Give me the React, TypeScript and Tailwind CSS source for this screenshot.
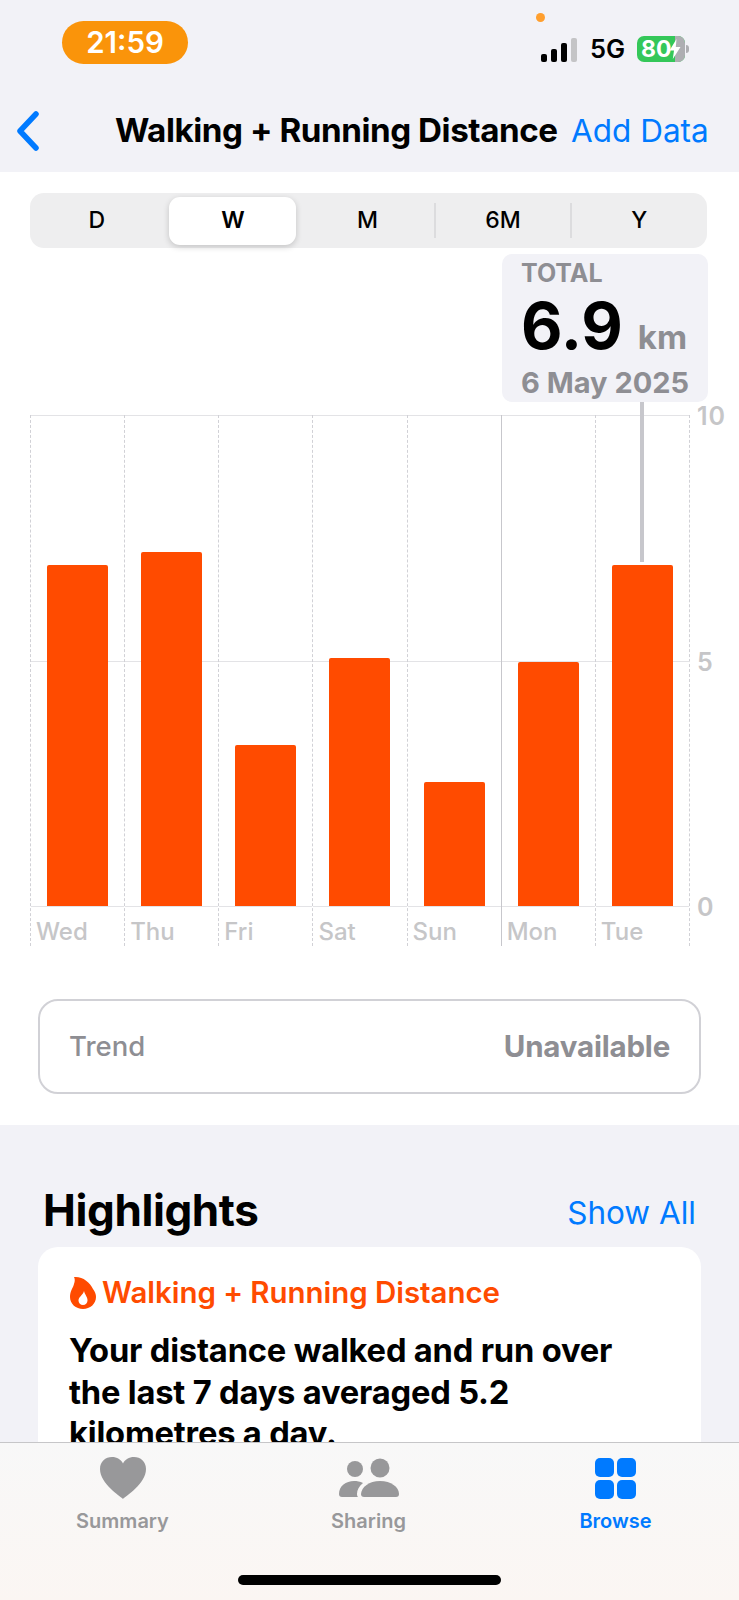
export default function App() {
  const days = [
    { d: "Wed", h: "h-[341px]", solid: false },
    { d: "Thu", h: "h-[354px]", solid: false },
    { d: "Fri", h: "h-[161px]", solid: false },
    { d: "Sat", h: "h-[248px]", solid: false },
    { d: "Sun", h: "h-[124px]", solid: false },
    { d: "Mon", h: "h-[244px]", solid: true },
    { d: "Tue", h: "h-[341px]", solid: false },
  ];
  const font = { fontFamily: "Inter, 'Liberation Sans', sans-serif" };
  return (
    <div style={font} className="relative w-[739px] h-[1600px] overflow-hidden bg-[#f2f2f7] text-black">
      {/* Status + nav */}
      <header className="relative h-[172px] flex flex-col">
        <div className="absolute left-[536px] top-[13px] w-[9px] h-[9px] rounded-full bg-[#ff9f2e]" />
        <div className="flex justify-between items-start h-[92px]">
          <div className="ml-[62px] mt-[21px] w-[126px] h-[43px] rounded-[22px] bg-[#fa940a] flex items-center justify-center text-white text-[29.5px] font-semibold">21:59</div>
          <div className="flex items-center mt-[36px] mr-[50px] h-[26px]">
            <svg width="37" height="24" viewBox="0 0 37 24" className="mt-[1px]">
              <rect x="0" y="16" width="6" height="8" rx="2" fill="#000" />
              <rect x="10" y="11" width="6" height="13" rx="2" fill="#000" />
              <rect x="20" y="5" width="6" height="19" rx="2" fill="#000" />
              <rect x="30" y="0" width="6" height="24" rx="2" fill="#c4c4c6" />
            </svg>
            <span className="ml-[12px] text-[25.5px] font-semibold leading-none w-[47px]">5G</span>
            <div className="relative w-[48px] h-[26px] rounded-[7px] overflow-hidden flex bg-[#34c759]">
              <div className="absolute right-0 top-0 bottom-0 w-[10px] bg-[#aeaeb2]" />
              <span className="relative ml-[4px] text-white text-[23px] font-bold leading-[26px]">80</span>
              <svg width="12" height="20" viewBox="0 0 12 20" className="absolute right-[4px] top-[3px]">
                <path d="M7.5 0 L0.5 11.5 H5 L3.8 20 L11.5 8 H6.8 Z" fill="#fff" />
              </svg>
            </div>
            <div className="w-[3px] h-[8px] ml-[1px] rounded-r-full bg-[#aeaeb2]" />
          </div>
        </div>
        <nav className="flex items-center h-[62px] mt-[8px]">
          <svg width="26" height="40" viewBox="0 0 26 40" className="ml-[15px]">
            <path d="M21 3 L5 20 L21 37" fill="none" stroke="#007aff" strokeWidth="5.5" strokeLinecap="round" strokeLinejoin="round" />
          </svg>
          <div className="ml-[74px] w-[456px] text-[33.2px] font-bold tracking-[-0.45px] whitespace-nowrap">Walking + Running Distance</div>
          <div className="text-[31.5px] text-[#007aff] whitespace-nowrap">Add Data</div>
        </nav>
      </header>

      <main className="bg-white h-[953px] pt-[21px]">
        {/* Segmented control */}
        <div className="relative ml-[30px] w-[677px] h-[55px] rounded-[14px] bg-[#eeeeef] grid grid-cols-5 items-center text-[23px] font-medium text-center">
          <div className="absolute left-[139px] top-[4px] w-[127px] h-[48px] rounded-[11px] bg-white shadow-[0_2px_6px_rgba(0,0,0,0.18)]" />
          <div className="relative pr-[2px]">D</div>
          <div className="relative font-semibold">W</div>
          <div className="relative border-r-2 border-[#dcdcde]">M</div>
          <div className="relative border-r-2 border-[#dcdcde]">6M</div>
          <div className="relative">Y</div>
        </div>

        {/* Chart */}
        <div className="relative mt-[167px] ml-[30px] w-[660px]">
          <div className="absolute left-[472px] -top-[161px] w-[206px] h-[148px] rounded-[10px] bg-[#f2f2f7] z-10 pl-[19px] pt-[6px]">
            <div className="text-[25px] leading-[26px] font-bold text-[#8e8e93]">TOTAL</div>
            <div className="flex items-baseline mt-[5px] h-[70px]">
              <span className="text-[64px] leading-[70px] font-bold">6.9</span>
              <span className="ml-[15px] text-[33px] font-bold text-[#8e8e93]">km</span>
            </div>
            <div className="text-[29px] leading-[36px] font-bold text-[#8e8e93] whitespace-nowrap mt-[4px]">6 May 2025</div>
          </div>
          <div className="absolute left-[610px] -top-[13px] w-[4px] h-[160px] bg-[#c7c7cc] z-10" />

          <div className="absolute left-0 right-0 top-[246px] h-px bg-[#e3e3e6]" />
          <div className="absolute left-[667px] top-[-9px] text-[25px] leading-[20px] font-semibold tracking-[1px] text-[#c6c6c8]">10</div>
          <div className="absolute left-[667px] top-[237px] text-[25px] leading-[20px] font-semibold text-[#c6c6c8]">5</div>
          <div className="absolute left-[667px] top-[482px] text-[25px] leading-[20px] font-semibold text-[#c6c6c8]">0</div>

          <div className="grid grid-cols-7 border-r border-dashed border-[#d1d1d6]">
            {days.map((x) => (
              <div key={x.d} className={x.solid ? "relative border-l border-solid border-[#c7c7cc]" : "relative border-l border-dashed border-[#d1d1d6]"}>
                <div className="h-[492px] flex items-end justify-center border-y border-[#e3e3e6]">
                  <div className={"relative w-[61px] rounded-t-[2px] bg-[#ff4b00] " + x.h} />
                </div>
                <div className="h-[39px] pl-[5px] pt-[11px] text-[24px] leading-[28px] font-medium text-[#c6c6c8]">{x.d}</div>
              </div>
            ))}
          </div>
        </div>

        {/* Trend */}
        <div className="mt-[53px] mx-[38px] h-[95px] rounded-[20px] border-2 border-[#d1d1d6] flex items-center justify-between pl-[29px] pr-[29px] text-[#8e8e93]">
          <span className="font-medium text-[27.5px]">Trend</span>
          <span className="font-bold text-[29.5px] tracking-[-0.2px]">Unavailable</span>
        </div>
      </main>

      {/* Highlights */}
      <section className="px-[38px]">
        <div className="flex justify-between items-center h-[122px] pt-[47px] pl-[5px] pr-[5px]">
          <h2 className="text-[44px] font-bold tracking-[-0.4px]">Highlights</h2>
          <span className="text-[31.5px] text-[#007aff] mt-[6px]">Show All</span>
        </div>
        <div className="rounded-[20px] bg-white h-[300px] px-[31px] pt-[23px]">
          <div className="flex items-center gap-[6px]">
            <svg width="26" height="33" viewBox="0 0 26 33" className="ml-[1px]">
              <path fillRule="evenodd" d="M4 1 C12 0 20 6 23 13 C25 16 26 18 26 21 C26 28 20 33 13 33 C6 33 0 28 0 21 C0 15 3 12 4 8 C5 5 5 3 4 1 Z M14 15 C13 19 8.5 21 8.5 24.5 C8.5 27 10.5 29 13 29 C15.5 29 17.5 27 17.5 24.5 C17.5 21 15 19 14 15 Z" fill="#ff4b00" />
            </svg>
            <span className="text-[29.5px] font-semibold tracking-[-0.05px] text-[#ff4b00] whitespace-nowrap">Walking + Running Distance</span>
          </div>
          <p className="mt-[16px] text-[32.7px] leading-[41.5px] font-bold tracking-[-0.2px]">Your distance walked and run over<br />the last 7 days averaged 5.2<br />kilometres a day.</p>
        </div>
      </section>

      {/* Tab bar */}
      <footer className="absolute left-0 right-0 bottom-0 h-[158px] border-t border-[#c6c6c8] bg-gradient-to-b from-[#f8f8f8] to-[#fbf6f3] grid grid-cols-[245px_247px_247px] text-center text-[20px] font-semibold text-[#98989a]">
        <div className="flex flex-col items-center pt-[14px]">
          <svg width="46" height="42" viewBox="0 0 46 42">
            <path d="M23 42 C20.5 39 0 27 0 12 C0 4.5 5.5 0 12 0 C17 0 21 2.5 23 6.5 C25 2.5 29 0 34 0 C40.5 0 46 4.5 46 12 C46 27 25.5 39 23 42 Z" fill="#98989a" />
          </svg>
          <span className="mt-[7px]">Summary</span>
        </div>
        <div className="flex flex-col items-center pt-[15px]">
          <svg width="60" height="40" viewBox="0 0 60 40">
            <circle cx="16" cy="11" r="8" fill="#98989a" />
            <circle cx="41" cy="10" r="9.5" fill="#98989a" />
            <path d="M3 39 C1 39 0 38 0 36 C0 28 7 23 15 23 C18 23 21 23.5 24 25 C20 28 18 32 18 36 C18 37.5 18.5 38.5 19 39 Z" fill="#98989a" />
            <path d="M25 39 C23 39 22 38 22 36 C22.500 29 30 23 41 23 C52 23 60 29 60 36 C60 38 59 39 57 39 Z" fill="#98989a" />
          </svg>
          <span className="mt-[8px]">Sharing</span>
        </div>
        <div className="flex flex-col items-center pt-[15px] text-[#007aff]">
          <div className="grid grid-cols-2 gap-[3px] w-[41px]">
            <div className="h-[19px] rounded-[5px] bg-[#007aff]" />
            <div className="h-[19px] rounded-[5px] bg-[#007aff]" />
            <div className="h-[19px] rounded-[5px] bg-[#007aff]" />
            <div className="h-[19px] rounded-[5px] bg-[#007aff]" />
          </div>
          <span className="mt-[7px]">Browse</span>
        </div>
        <div className="absolute left-[238px] bottom-[15px] w-[263px] h-[10px] rounded-full bg-black" />
      </footer>
    </div>
  );
}
